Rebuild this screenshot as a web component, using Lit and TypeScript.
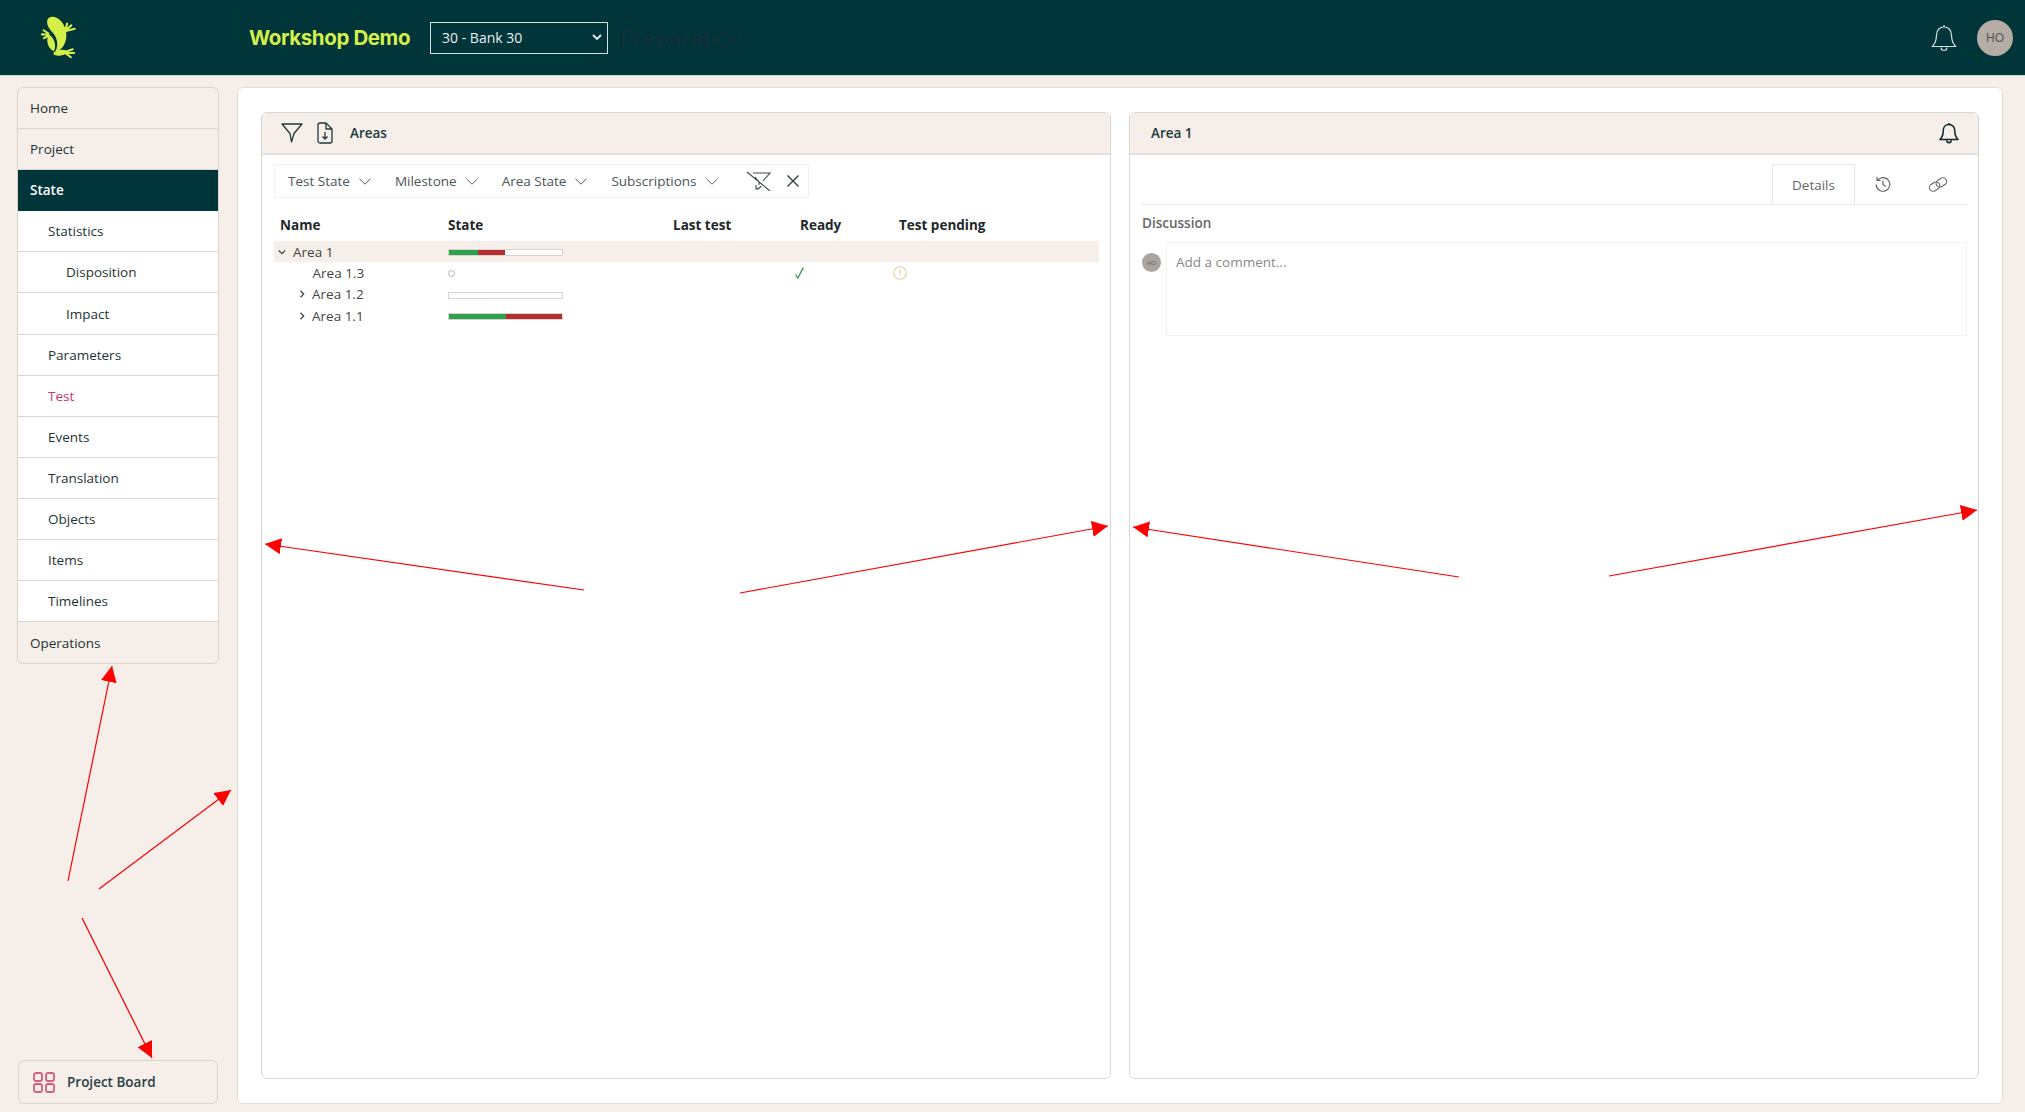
import { LitElement, html, svg, css } from "lit";
import { customElement } from "lit/decorators.js";

const chevDown = html`<svg class="chev" viewBox="0 0 12 7" width="12" height="7"><path d="M.5.8 6 6.2 11.5.8" fill="none" stroke="#555" stroke-width="1"/></svg>`;

const frog = html`<svg class="logo" viewBox="60 46 110 130" width="39" height="45" fill="#d6f04a">
  <path d="M83 60C90 42 124 50 135 86C144 116 130 148 105 154C117 132 112 108 92 90C85 81 80 70 83 60Z"/>
  <path d="M87 102C102 111 110 132 102 151C87 143 76 124 87 102Z"/>
  <ellipse cx="120" cy="155" rx="20" ry="8" transform="rotate(-8 120 155)"/>
  <g fill="none" stroke="#d6f04a" stroke-width="6" stroke-linecap="round">
    <path d="M136 152 156 145M138 155 160 156M136 157 151 168"/>
    <path d="M134 92 140 71M136 90 152 76M136 92 162 86"/>
    <path d="M86 100 72 90M85 103 67 102M87 106 73 113"/>
  </g>
</svg>`;

const bell = (cls: string, sw: number) => html`<svg class=${cls} viewBox="0 0 26 28" fill="none" stroke="currentColor" stroke-width=${sw} stroke-linejoin="round">
  <path d="M13 3c-4.600 0-7.500 3.400-7.500 8 0 6-1.800 9-4.200 11.500h23.400C22.300 20 20.500 17 20.500 11c0-4.600-2.900-8-7.500-8Z"/>
  <path d="M13 1v2M10 23.500c0 4 6 4 6 0"/>
</svg>`;

const funnel = html`<svg class="ic-funnel" viewBox="0 0 22 20" width="22" height="20" fill="none" stroke="#1f3a3d" stroke-width="1.300" stroke-linejoin="round"><path d="M1 1h20l-8 9.500-2.500 8.500-1.500-8.500Z"/></svg>`;
const docDown = html`<svg class="ic-doc" viewBox="0 0 16 22" width="16" height="22" fill="none" stroke="#1f3a3d" stroke-width="1.300" stroke-linejoin="round"><path d="M3 1h6l6 6v12a2 2 0 0 1-2 2H3a2 2 0 0 1-2-2V3a2 2 0 0 1 2-2Z"/><path d="M9 1v6h6M8 10v7M5.500 14.500 8 17l2.500-2.500"/></svg>`;
const funnelOff = html`<svg viewBox="0 0 25 20" width="25" height="20" fill="none" stroke="#3a4a4c" stroke-width="1.100"><path d="M7 2h17l-7 8M9 6l4 5v3M1 1l23 19"/><path d="M10 14v4h3M10 18c3 0 4-1 5-3"/></svg>`;
const closeX = html`<svg viewBox="0 0 12 12" width="12" height="12" fill="none" stroke="#2c3c3e" stroke-width="1.300"><path d="M.5.5l11 11M11.500.5l-11 11"/></svg>`;
const chevRow = (open: boolean) => html`<svg class="rc" viewBox="0 0 8 8" width="8" height="8" fill="none" stroke="#3a4a4c" stroke-width="1.300"><path d=${open ? "M.8 2.500 4 5.700 7.200 2.500" : "M2.500.8 5.700 4 2.500 7.200"}/></svg>`;
const history = html`<svg viewBox="0 0 16 16" width="16" height="16" fill="none" stroke="#666" stroke-width="1.200"><path d="M2.600 4.300A6.800 6.800 0 1 1 1.200 8.500M2 1v3.500h3.500M8 4.500V8.500l2.800 2"/></svg>`;
const link = html`<svg viewBox="0 0 20 15" width="20" height="15" fill="none" stroke="#666" stroke-width="1.100"><g transform="rotate(-32 10 7.500)"><rect x="0.500" y="3.800" width="11" height="7.400" rx="3.700"/><rect x="8.500" y="3.800" width="11" height="7.400" rx="3.700"/></g></svg>`;
const boardIcon = html`<svg viewBox="0 0 22 21" width="22" height="21" fill="none" stroke="#d4607f" stroke-width="1.800"><rect x="1" y="1" width="8" height="8" rx="2"/><rect x="13" y="1" width="8" height="8" rx="2"/><rect x="1" y="12" width="8" height="8" rx="2"/><rect x="13" y="12" width="8" height="8" rx="2"/></svg>`;
const check = html`<svg viewBox="0 0 9 12" width="9" height="12" fill="none" stroke="#3f9a5c" stroke-width="1.400"><path d="M.6 7.500 2.800 11 8.400.6"/></svg>`;
const warn = html`<svg viewBox="0 0 14 14" width="14" height="14" fill="none" stroke="#e6cd9b" stroke-width="1.100"><circle cx="7" cy="7" r="6.300"/><path d="M7 3.200v4.800M7 9.600v1.200"/></svg>`;

const NAV: [string, string][] = [
  ["Home", "top"], ["Project", "top"], ["State", "active"], ["Statistics", "l1"],
  ["Disposition", "l2"], ["Impact", "l2"], ["Parameters", "l1"], ["Test", "l1 pink"],
  ["Events", "l1"], ["Translation", "l1"], ["Objects", "l1"], ["Items", "l1"], ["Timelines", "l1"], ["Operations", "top"],
];

const ARROWS = [
  [584, 590, 265, 544], [740, 593, 1108, 526], [1459, 577, 1133, 527], [1609, 576, 1977, 510],
  [68, 881, 112, 666], [99, 889, 231, 790], [82, 918, 152, 1058],
];

@customElement("app-root")
export class AppRoot extends LitElement {
  static styles = css`
    :host { display: block; position: relative; width: 2025px; height: 1112px; overflow: hidden; background: #f5eee9; font-family: "Open Sans", sans-serif; font-size: 13.500px; color: #1e3336; }
    .page { display: flex; flex-direction: column; height: 100%; }
    header { height: 75px; flex: none; background: #00353a; border-bottom: 1px solid #c9d8d6; box-sizing: content-box; display: flex; align-items: center; }
    .logo { margin-left: 39px; flex: none; }
    .title { margin-left: 171px; font-family: Inter, sans-serif; font-weight: 700; font-size: 20.500px; letter-spacing: -0.400px; color: #d6f04a; }
    .select { margin-left: 20px; width: 178px; height: 32px; box-sizing: border-box; border: 1px solid #d3e2e0; display: flex; align-items: center; justify-content: space-between; padding: 0 5px 0 11px; color: #e6efee; font-size: 14px; }
    .prep { margin-left: 12px; color: #16303a; font-size: 22.300px; }
    .spacer { flex: 1; }
    .hbell { width: 26px; height: 28px; color: #cfe0de; margin-right: 20px; }
    .avatar { width: 36px; height: 36px; border-radius: 50%; background: #b5aca6; color: #555; font-size: 12px; display: flex; align-items: center; justify-content: center; margin-right: 12px; font-family: "Liberation Sans", sans-serif; }
    .body { flex: 1; min-height: 0; display: flex; gap: 18px; padding: 11px 22px 8px 17px; }
    aside { width: 202px; flex: none; display: flex; flex-direction: column; justify-content: space-between; }
    nav { border: 1px solid #dcd3cd; border-radius: 6px; overflow: hidden; }
    .nav-row { height: 41.100px; box-sizing: border-box; display: flex; align-items: center; padding-left: 12px; border-bottom: 1px solid #d9d5d2; font-weight: 500; }
    .nav-row:last-child { border-bottom: none; }
    .nav-row.active { background: #00353a; color: #fff; font-weight: 600; border-bottom-color: #00353a; }
    .nav-row.l1 { background: #fff; padding-left: 30px; }
    .nav-row.l2 { background: #fff; padding-left: 48px; }
    .nav-row.pink { color: #c8386a; }
    .board { height: 44px; width: 200px; margin-left: 1px; box-sizing: border-box; border: 1px solid #dcd3cd; border-radius: 6px; display: flex; align-items: center; gap: 12px; padding-left: 14px; font-weight: 600; color: #2a4245; }
    main { flex: 1; min-width: 0; background: #fff; border: 1px solid #e2dcd7; border-radius: 6px; padding: 24px 23px 24px 23px; display: flex; gap: 18px; box-sizing: border-box; }
    .panel { flex: 1; min-width: 0; border: 1px solid #dad8d6; border-width: 1.500px; border-radius: 6px; display: flex; flex-direction: column; overflow: hidden; }
    .phead { height: 42px; flex: none; background: #f5eee9; border-bottom: 2px solid #e4e0dc; box-sizing: border-box; display: flex; align-items: center; font-weight: 600; color: #1e3a3e; }
    .phead.left { padding-left: 19px; }
    .ic-doc { margin-left: 14px; }
    .phead.left .ptitle { margin-left: 17px; }
    .phead.right { padding: 0 19px 0 21px; justify-content: space-between; }
    .pbell { width: 20px; height: 22px; color: #10292c; }
    .pbody { padding: 9px 11px 0 12px; }
    .filters { height: 34px; width: 535px; box-sizing: border-box; border: 1px solid #f3f2f0; display: flex; align-items: center; padding-left: 13px; gap: 24px; color: #4b5556; }
    .fitem { display: flex; align-items: center; gap: 9px; }
    .fbtn { display: flex; align-items: center; margin-left: 4px; }
    .fbtn + .fbtn { margin-left: -8px; }
    .thead, .tr { display: grid; grid-template-columns: 174px 225px 127px 99px 1fr; align-items: center; }
    .thead { margin-top: 13px; margin-bottom: 3px; height: 27px; font-weight: 700; color: #20282a; }
    .thead > :first-child { padding-left: 6px; }
    .tr { height: 21.300px; color: #444; width: 825px; }
    .tr.sel { background: #f5eee9; }
    .name { display: flex; align-items: center; }
    .name.root { padding-left: 4px; gap: 7px; }
    .name.sub { padding-left: 24px; gap: 6px; }
    .name.leaf { padding-left: 38.500px; }
    .bar { width: 115px; height: 7px; margin-top: 2px; border: 1px solid #d6d3d1; box-sizing: border-box; display: flex; background: #fff; }
    .g { background: #2fa14e; }
    .r { background: #b22f2f; }
    .dot { width: 7px; height: 7px; margin-top: 2px; border-radius: 50%; border: 1px solid #b5b5b5; box-sizing: border-box; }
    .warn { display: flex; margin-left: -6px; }
    .ok { display: flex; margin-left: -5px; }
    .tabs { display: flex; justify-content: flex-end; align-items: stretch; height: 41px; border-bottom: 1px solid #e6e6e6; box-sizing: border-box; padding-right: 1px; }
    .pbody.rb { padding: 9px 11px 0 12px; }
    .tab { width: 81px; border: 1px solid #e6e6e6; border-bottom: none; display: flex; align-items: center; justify-content: center; color: #666; background: #fff; }
    .tabic { display: flex; align-items: center; justify-content: center; width: 55px; }
    .tabic.last { margin-right: 1px; }
    .disc { margin-top: 9px; color: #666; font-weight: 600; line-height: 19px; }
    .comment { display: flex; margin-top: 9px; align-items: flex-start; gap: 5px; }
    .cav { width: 19px; height: 19px; flex: none; margin-top: 11px; border-radius: 50%; background: #aaa39e; color: #666; font-size: 6px; display: flex; align-items: center; justify-content: center; font-family: "Liberation Sans", sans-serif; }
    .cbox { flex: 1; height: 94px; border: 1px solid #f3f2f0; box-sizing: border-box; padding: 10px 9px; color: #888; font-size: 13.500px; }
    .overlay { position: absolute; inset: 0; width: 2025px; height: 1112px; pointer-events: none; }
  `;

  render() {
    return html`
      <div class="page">
        <header>
          ${frog}
          <div class="title">Workshop Demo</div>
          <div class="select"><span>30 - Bank 30</span><svg viewBox="0 0 10 7" width="10" height="7" fill="none" stroke="#e6efee" stroke-width="1.800"><path d="M1 1l4 4 4-4"/></svg></div>
          <div class="prep">Preparation</div>
          <div class="spacer"></div>
          ${bell("hbell", 1.2)}
          <div class="avatar">HO</div>
        </header>
        <div class="body">
          <aside>
            <nav>${NAV.map(([t, c]) => html`<div class="nav-row ${c}">${t}</div>`)}</nav>
            <div class="board">${boardIcon}<span>Project Board</span></div>
          </aside>
          <main>
            <section class="panel">
              <div class="phead left">${funnel}${docDown}<span class="ptitle">Areas</span></div>
              <div class="pbody">
                <div class="filters">
                  ${["Test State", "Milestone", "Area State", "Subscriptions"].map((f) => html`<div class="fitem"><span>${f}</span>${chevDown}</div>`)}
                  <div class="fbtn">${funnelOff}</div>
                  <div class="fbtn">${closeX}</div>
                </div>
                <div class="thead"><div>Name</div><div>State</div><div>Last test</div><div>Ready</div><div>Test pending</div></div>
                <div class="tr sel"><div class="name root">${chevRow(true)}<span>Area 1</span></div><div class="bar"><div class="g" style="width:26%"></div><div class="r" style="width:24%"></div></div></div>
                <div class="tr"><div class="name leaf">Area 1.3</div><div class="dot"></div><div></div><div class="ok">${check}</div><div class="warn">${warn}</div></div>
                <div class="tr"><div class="name sub">${chevRow(false)}<span>Area 1.2</span></div><div class="bar"></div></div>
                <div class="tr"><div class="name sub">${chevRow(false)}<span>Area 1.1</span></div><div class="bar"><div class="g" style="width:50%"></div><div class="r" style="width:50%"></div></div></div>
              </div>
            </section>
            <section class="panel">
              <div class="phead right"><span>Area 1</span>${bell("pbell", 2)}</div>
              <div class="pbody rb">
                <div class="tabs"><div class="tab">Details</div><div class="tabic">${history}</div><div class="tabic last">${link}</div></div>
                <div class="disc">Discussion</div>
                <div class="comment"><div class="cav">HO</div><div class="cbox">Add a comment...</div></div>
              </div>
            </section>
          </main>
        </div>
      </div>
      <svg class="overlay" viewBox="0 0 2025 1112">
        <defs><marker id="ah" markerUnits="userSpaceOnUse" markerWidth="16" markerHeight="16" refX="16" refY="8" orient="auto"><path d="M0 0 16 8 0 16Z" fill="#f00"/></marker></defs>
        ${ARROWS.map(([a, b, c, d]) => svg`<line x1=${a} y1=${b} x2=${c} y2=${d} stroke="#f00" stroke-width="1.200" marker-end="url(#ah)"></line>`)}
      </svg>
    `;
  }
}
